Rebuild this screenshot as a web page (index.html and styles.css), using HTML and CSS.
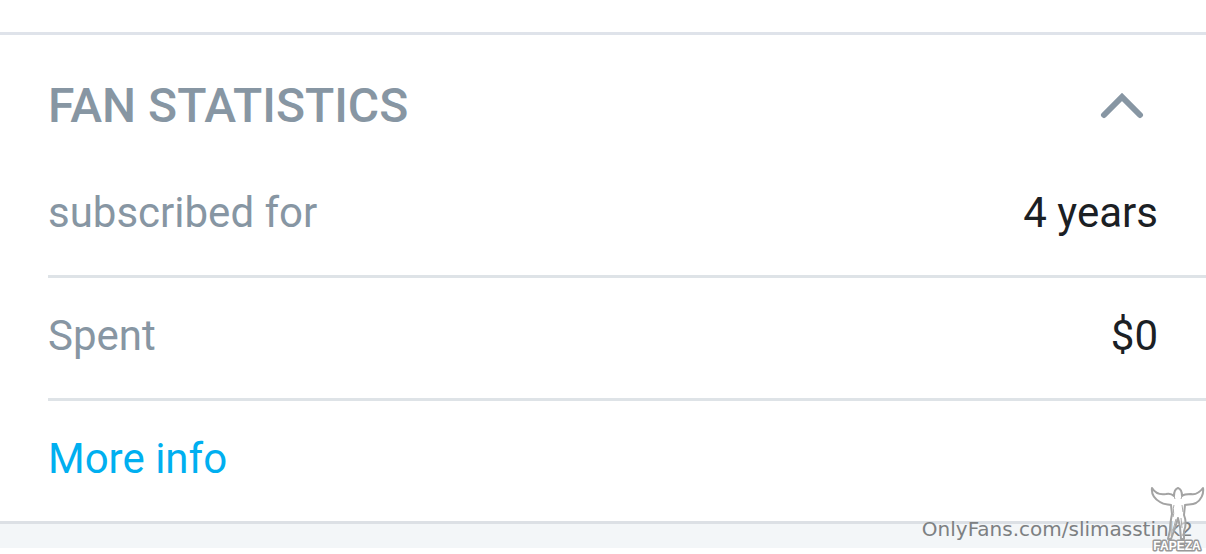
FILE: index.html
```html
<!DOCTYPE html>
<html lang="en">
<head>
    <meta charset="UTF-8">
    <meta name="viewport" content="width=device-width, initial-scale=1.0">
    <title>Fan Statistics</title>
    <link rel="stylesheet" href="styles.css">
</head>
<body>

<div class="page">
    <!-- Fan statistics -->
    <section class="stats">
        <div class="stats-header">
            <h1>FAN STATISTICS</h1>
            <button class="toggle" type="button" aria-label="Collapse" aria-expanded="true">
                <svg width="44" height="28" viewBox="0 0 44 28">
                    <path d="M4 24 L22 6 L40 24" />
                </svg>
            </button>
        </div>
        <dl class="stats-list">
            <div class="row">
                <dt>subscribed for</dt>
                <dd>4 years</dd>
            </div>
            <div class="row">
                <dt>Spent</dt>
                <dd>$0</dd>
            </div>
        </dl>
        <div class="more">
            <a href="#">More info</a>
        </div>
    </section>
    <div class="footer"></div>

    <!-- Watermark -->
    <div class="watermark">OnlyFans.com/slimasstink2</div>
    <div class="badge">
        <svg width="56" height="70" viewBox="0 0 56 70">
            <path class="figure" d="M2 4 C5 9 10 11 16 10 C20 9 23 11 24 12 C24 8 25 5 28 4 C31 5 32 8 32 12 C34 10 37 10 41 10 C46 11 50 8 53 4 C54 10 51 16 46 19 C42 21 38 20 35 21 L34 31 C36 36 36 42 34 47 L34 55 L31 55 L30 43 L28 34 L25 44 L21 55 L18 55 L20 46 C20 40 21 35 22 30 L21 21 C18 20 14 21 10 18 C5 15 1 11 2 4 Z" />
            <path class="detail" d="M24 12 L25 15 M32 12 L31 15 M24 21 C22 26 25 28 23 33 M32 21 L33 28 M26 35 L23 46 M31 34 L32 44" />
            <text x="27" y="66" text-anchor="middle">FAPEZA</text>
        </svg>
    </div>
</div>

</body>
</html>
```

FILE: styles.css
```css
* {
    box-sizing: border-box;
}

body {
    margin: 0;
    background-color: #fff;
    font-family: Roboto, Arial, sans-serif;
    font-size: 42px;
    color: #1b2024;
}

.page {
    position: relative;
    padding: 32px 0 6px;
}

/* Statistics */
.stats {
    border-top: 3px solid #dfe3ea;
    border-bottom: 3px solid #dce0e5;
}

.stats-header {
    display: flex;
    align-items: center;
    justify-content: space-between;
    height: 120px;
    padding: 20px 62px 0 48px;
}

.stats-header h1 {
    margin: 0;
    font-size: 48px;
    font-weight: 500;
    color: #8796a3;
}

.toggle {
    display: flex;
    padding: 0;
    border: none;
    background: none;
    cursor: pointer;
}

.toggle path {
    fill: none;
    stroke: #8796a3;
    stroke-width: 6;
    stroke-linecap: round;
}

.stats-list {
    margin: 0 0 0 48px;
}

.row {
    display: flex;
    align-items: center;
    justify-content: space-between;
    height: 123px;
    padding: 0 48px 6px 0;
    border-bottom: 3px solid #dee3e7;
}

.row dt {
    color: #8796a3;
}

.row dd {
    margin: 0;
}

.more {
    display: flex;
    align-items: center;
    height: 120px;
    padding: 0 48px 6px;
}

.more a {
    color: #00aff0;
    text-decoration: none;
}

.footer {
    height: 24px;
    background-color: #f3f6f8;
}

/* Watermark */
.watermark {
    position: absolute;
    right: 13px;
    bottom: 12px;
    font-family: "DejaVu Sans", sans-serif;
    font-size: 20px;
    line-height: 26px;
    color: #7d8082;
}

.badge {
    position: absolute;
    right: 0;
    bottom: 0;
}

.badge svg {
    display: block;
}

.figure {
    fill: rgba(255, 255, 255, 0.5);
    stroke: #a3a3a3;
    stroke-width: 2;
    stroke-linejoin: round;
}

.detail {
    fill: none;
    stroke: #aaa;
    stroke-width: 1;
}

.badge text {
    font-family: "Liberation Sans", Arial, sans-serif;
    font-size: 12px;
    font-weight: bold;
    fill: #fff;
    stroke: #999;
    stroke-width: 3;
    stroke-linejoin: round;
    paint-order: stroke;
}
```
